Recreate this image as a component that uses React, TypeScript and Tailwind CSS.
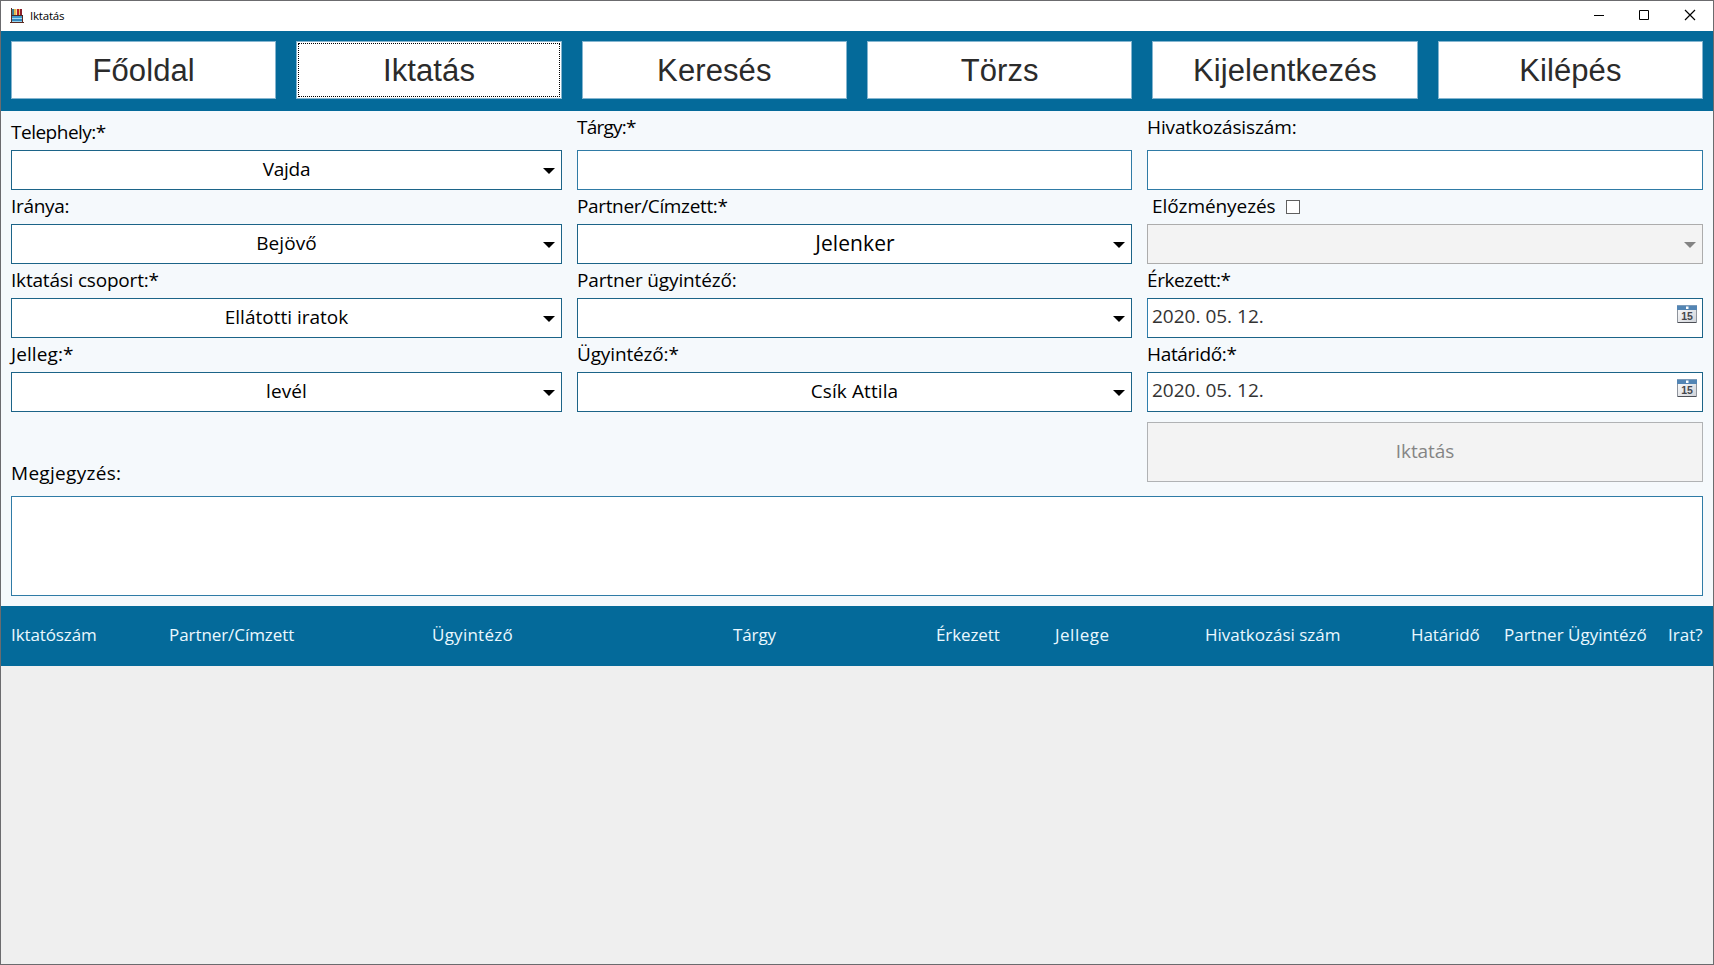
import type { ReactNode } from "react";

const navItems = ["Főoldal", "Iktatás", "Keresés", "Törzs", "Kijelentkezés", "Kilépés"];

const columns = [
  { title: "Iktatószám", tracking: "tracking-[-0.1px]" },
  { title: "Partner/Címzett", tracking: "tracking-[-0.07px]" },
  { title: "Ügyintéző", tracking: "tracking-[0.25px]" },
  { title: "Tárgy", tracking: "tracking-[-0.1px]" },
  { title: "Érkezett", tracking: "tracking-[-0.1px]" },
  { title: "Jellege", tracking: "tracking-[0.5px]" },
  { title: "Hivatkozási szám", tracking: "" },
  { title: "Határidő", tracking: "tracking-[-0.1px]" },
  { title: "Partner Ügyintéző", tracking: "" },
  { title: "Irat?", tracking: "" },
];

function AppIcon() {
  return (
    <svg width="15" height="16" viewBox="0 0 15 16" shapeRendering="crispEdges">
      <rect x="1" y="0" width="1" height="15" fill="#5a2a22" />
      <rect x="12" y="7" width="1" height="8" fill="#5a2a22" />
      <rect x="2" y="1" width="2" height="6" fill="#3d7f93" />
      <rect x="4" y="1" width="2" height="6" fill="#e8b64c" />
      <rect x="6" y="1" width="1" height="6" fill="#f3dfa2" />
      <rect x="7" y="1" width="2" height="6" fill="#b3202c" />
      <rect x="9" y="1" width="1" height="6" fill="#f0c25c" />
      <rect x="10" y="1" width="2" height="6" fill="#8b1f2a" />
      <rect x="1" y="7" width="12" height="1" fill="#4a2a2a" />
      <rect x="2" y="8" width="10" height="2" fill="#3d9bd0" />
      <rect x="2" y="10" width="10" height="1" fill="#a8dcf2" />
      <rect x="2" y="11" width="10" height="2" fill="#3489bd" />
      <rect x="2" y="13" width="10" height="1" fill="#9ad2ea" />
      <rect x="0" y="14" width="14" height="1" fill="#5a2a22" />
    </svg>
  );
}

function Arrow({ className }: { className: string }) {
  return (
    <svg width="12" height="6" viewBox="0 0 12 6" className={className}>
      <path d="M0 0H12L6 6Z" fill="currentColor" />
    </svg>
  );
}

function CalendarIcon() {
  return (
    <svg width="20" height="18" viewBox="0 0 20 18">
      <defs>
        <linearGradient id="page" x1="0" y1="0" x2="1" y2="1">
          <stop offset="0" stopColor="#ffffff" />
          <stop offset="1" stopColor="#cfd2d8" />
        </linearGradient>
      </defs>
      <rect x="0.5" y="0.5" width="19" height="17" fill="url(#page)" stroke="#8f949c" />
      <rect x="0" y="0" width="20" height="5" fill="#5385b4" />
      <rect x="0" y="0" width="20" height="1" fill="#7d9cba" />
      <rect x="9" y="1.5" width="2.5" height="2.5" fill="#ffffff" />
      <rect x="1" y="17" width="18" height="1" fill="#4d4f55" />
      <text x="10" y="15.2" textAnchor="middle" className="font-['Liberation_Sans',sans-serif] text-[10.5px] font-bold" fill="#45474d">
        15
      </text>
    </svg>
  );
}

function Label({ children, className = "" }: { children: ReactNode; className?: string }) {
  return <div className={`leading-[33px] whitespace-nowrap ${className}`}>{children}</div>;
}

function Combo({ value, className = "" }: { value?: string; className?: string }) {
  return (
    <div className="relative flex h-10 items-center justify-center border border-[#1c6488] bg-white pb-0.5">
      <span className={className}>{value}</span>
      <Arrow className="absolute top-[17px] right-1.5 text-black" />
    </div>
  );
}

function DateBox({ value }: { value: string }) {
  return (
    <div className="flex h-10 items-start justify-between border border-[#1c6488] border-l-[#2f7fae] bg-white pr-[5px] pl-1 text-[#333333]">
      <span className="leading-[35px]">{value}</span>
      <span className="pt-1.5">
        <CalendarIcon />
      </span>
    </div>
  );
}

function Field({ label, children }: { label: ReactNode; children: ReactNode }) {
  return (
    <div>
      <div className="h-[34px]">{label}</div>
      {children}
    </div>
  );
}

function FirstField({ label, children }: { label: ReactNode; children: ReactNode }) {
  return (
    <div>
      <div className="h-[39px]">{label}</div>
      {children}
    </div>
  );
}

export default function App() {
  return (
    <div className="flex h-[965px] w-[1714px] flex-col overflow-hidden border border-[#6b6b6e] bg-[#efefef] font-['Open_Sans',sans-serif] text-[19px] text-black [font-variant-ligatures:none]">
      <header className="flex h-[30px] shrink-0 items-center justify-between bg-white">
        <div className="flex items-center pl-[9px]">
          <AppIcon />
          <span className="ml-[5px] text-[11.5px] leading-4 tracking-[-0.2px]">Iktatás</span>
        </div>
        <svg width="120" height="30" viewBox="0 0 120 30" fill="none" stroke="#000000">
          <path d="M1 14.5H11" />
          <path d="M46.5 9.5H55.5V18.5H46.5Z" />
          <path d="M92 9L102 19M102 9L92 19" strokeWidth="1.2" />
        </svg>
      </header>

      <nav className="grid h-20 shrink-0 grid-cols-6 gap-x-5 bg-[#046a9a] px-2.5 pt-2.5 pb-3">
        {navItems.map((item, i) => (
          <button
            key={item}
            className="flex border border-[#84b5d0] bg-white p-px font-['Liberation_Sans',sans-serif] text-[31px] tracking-[0.1px] text-[#2b2b2b]"
          >
            <span
              className={`flex h-full w-full items-center justify-center border border-dotted pt-0.5 ${
                i === 1 ? "border-black" : "border-transparent"
              }`}
            >
              {item}
            </span>
          </button>
        ))}
      </nav>

      <main className="shrink-0 bg-[#f5f9fc] px-2.5 pb-2.5">
        <div className="grid grid-cols-[551px_555px_556px] gap-x-[15px]">
          <div>
            <FirstField label={<Label className="pt-[5px] tracking-[-0.5px]">Telephely:*</Label>}>
              <Combo value="Vajda" className="tracking-[-0.25px]" />
            </FirstField>
            <Field label={<Label className="tracking-[-0.3px]">Iránya:</Label>}>
              <Combo value="Bejövő" className="tracking-[0.1px]" />
            </Field>
            <Field label={<Label className="tracking-[-0.2px]">Iktatási csoport:*</Label>}>
              <Combo value="Ellátotti iratok" />
            </Field>
            <Field label={<Label className="tracking-[0.1px]">Jelleg:*</Label>}>
              <Combo value="levél" className="tracking-[0.1px]" />
            </Field>
          </div>

          <div>
            <FirstField label={<Label className="tracking-[-0.75px]">Tárgy:*</Label>}>
              <div className="h-10 border border-[#2f7ba6] bg-white" />
            </FirstField>
            <Field label={<Label className="tracking-[-0.35px]">Partner/Címzett:*</Label>}>
              <Combo value="Jelenker" className="pt-0.5 pl-px text-[21px] tracking-[0.1px]" />
            </Field>
            <Field label={<Label className="tracking-[-0.15px]">Partner ügyintéző:</Label>}>
              <Combo />
            </Field>
            <Field label={<Label className="tracking-[-0.15px]">Ügyintéző:*</Label>}>
              <Combo value="Csík Attila" className="tracking-[0.1px]" />
            </Field>
          </div>

          <div>
            <FirstField label={<Label className="tracking-[-0.12px]">Hivatkozásiszám:</Label>}>
              <div className="h-10 border border-[#2f7ba6] bg-white" />
            </FirstField>
            <Field
              label={
                <div className="flex pl-[5px]">
                  <Label className="tracking-[-0.07px]">Előzményezés</Label>
                  <span className="mt-2.5 ml-2.5 size-3.5 border border-[#606060] bg-white" />
                </div>
              }
            >
              <div className="relative h-10 border border-[#acacac] bg-[#f3f3f3]">
                <Arrow className="absolute top-[17px] right-1.5 text-[#838383]" />
              </div>
            </Field>
            <Field label={<Label className="tracking-[-0.4px]">Érkezett:*</Label>}>
              <DateBox value="2020. 05. 12." />
            </Field>
            <Field label={<Label className="tracking-[-0.33px]">Határidő:*</Label>}>
              <DateBox value="2020. 05. 12." />
            </Field>
          </div>
        </div>

        <div className="flex h-[84px] items-start justify-between">
          <Label className="pt-[45px] tracking-[0.3px]">Megjegyzés:</Label>
          <button className="mt-2.5 flex h-[60px] w-[556px] items-center justify-center border border-[#b0b2b4] bg-[#f3f3f3] pb-px tracking-[-0.1px] text-[#858585]">
            Iktatás
          </button>
        </div>
        <div className="h-[100px] border border-[#2f7ba6] bg-white" />
      </main>

      <div className="grid h-[60px] shrink-0 grid-cols-[158px_263px_301px_203px_119px_150px_206px_93px_164px_auto] items-center bg-[#046a9a] pb-[3px] pl-2.5 text-[17px] whitespace-nowrap text-[#eaf8ff]">
        {columns.map((column) => (
          <span key={column.title} className={column.tracking}>
            {column.title}
          </span>
        ))}
      </div>
    </div>
  );
}
